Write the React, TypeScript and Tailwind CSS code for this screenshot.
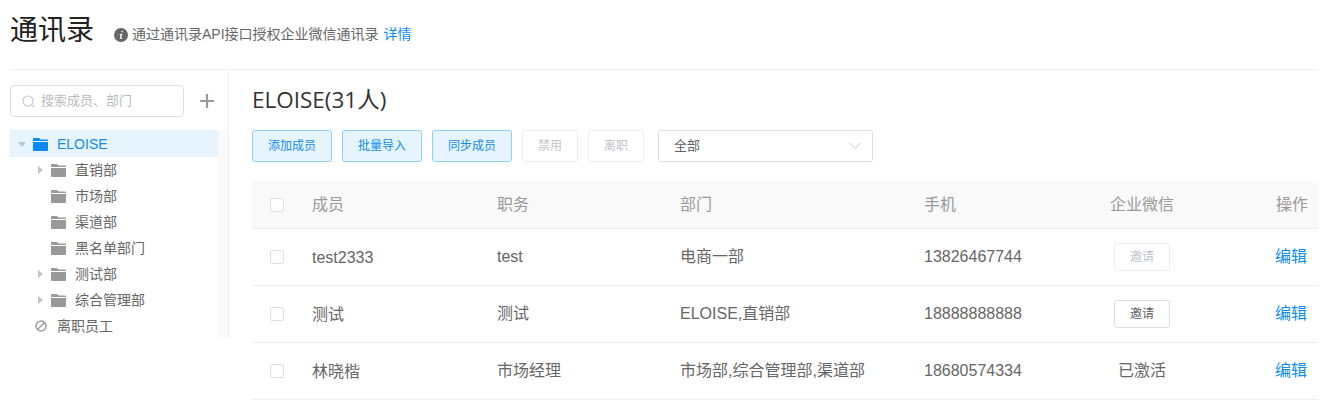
import React from "react";

function Folder({ color }: { color: string }) {
  return (
    <svg width="15" height="13" viewBox="0 0 15 13" className="shrink-0">
      <path d="M0 .8C0 .4.400 0 .8 0h4.700c.3 0 .5.100.7.300L7.600 1.600h6.600c.4 0 .8.400.8.800V3H0z" fill={color} />
      <path d="M0 4h15v8.200c0 .4-.4.800-.8.800H.8c-.4 0-.8-.4-.8-.8z" fill={color} />
    </svg>
  );
}

function Tree({ label, caret, active, indent }: { label: string; caret?: "right" | "down"; active?: boolean; indent?: boolean }) {
  return (
    <div className={`flex items-center ${active ? "h-[27px] bg-[#e8f4fd] pt-[1px] text-[#0f8df0]" : "h-[26px] text-[#666]"}`}>
      <div className={`flex shrink-0 items-center justify-end ${indent ? "w-[36px]" : "w-[18px]"}`}>
        {caret === "right" && <div className="mr-[3px] h-0 w-0 border-y-[4px] border-l-[5px] border-y-transparent border-l-[#c0c4cc]" />}
        {caret === "down" && <div className="mr-[2px] h-0 w-0 border-x-[4px] border-t-[5px] border-x-transparent border-t-[#c0c4cc]" />}
      </div>
      <div className="ml-[5px]">
        <Folder color={active ? "#0a8af0" : "#999"} />
      </div>
      <span className="ml-[9px] text-[14px]">{label}</span>
    </div>
  );
}

const rowGrid = "grid grid-cols-[60px_185px_183px_244px_130px_176px_1fr] items-center";

function Check() {
  return <div className="ml-[18px] h-[14px] w-[14px] rounded-[2px] border border-[#dcdfe6] bg-white" />;
}

function Row({ a, b, c, d, wx }: { a: string; b: string; c: string; d: string; wx: React.ReactNode }) {
  return (
    <div className={`${rowGrid} h-[57px] border-b border-[#ebeef5] text-[16px] text-[#666]`}>
      <Check />
      <div className="pt-[1px]">{a}</div>
      <div>{b}</div>
      <div>{c}</div>
      <div>{d}</div>
      <div className="flex justify-center">{wx}</div>
      <div className="pl-[45px] text-[#0f8df0]">编辑</div>
    </div>
  );
}

function Btn({ children }: { children: React.ReactNode }) {
  return <button className="h-[32px] w-[80px] rounded-[3px] border border-[#91d0f8] bg-[#e6f4fd] text-[12px] text-[#0f8df0]">{children}</button>;
}

export default function App() {
  return (
    <div className="h-[409px] w-[1330px] overflow-hidden bg-white pl-[10px] pr-[12px] font-['Liberation_Sans','Noto_Sans_CJK_SC',sans-serif]">
      <div className="flex h-[70px] items-center border-b border-[#f0f0f0] pb-[8px]">
        <h1 className="text-[28px] font-normal leading-none text-[#222]">通讯录</h1>
        <div className="flex items-center pt-[8px]">
          <svg width="14" height="14" viewBox="0 0 14 14" className="ml-[20px]">
            <circle cx="7" cy="7" r="7" fill="#666" />
            <path d="M7.600 2.800h1.300l-.3 1.400H7.300zM6 6h2.400l-1 3.900h1l-.2.900H5.700l1-3.900h-1z" fill="#fff" />
          </svg>
          <span className="ml-[4px] text-[14px] text-[#666]">通过通讯录API接口授权企业微信通讯录</span>
          <span className="ml-[5px] text-[14px] text-[#0f8df0]">详情</span>
        </div>
      </div>
      <div className="flex">
        <aside className="h-[268px] w-[219px] shrink-0 border-r border-[#f0f0f0]">
          <div className="flex h-[60px] items-start pt-[15px]">
            <div className="flex h-[32px] w-[174px] items-center rounded-[4px] border border-[#dcdfe6] pl-[11px] text-[13px] text-[#bbb]">
              <svg width="13" height="13" viewBox="0 0 13 13" fill="none" stroke="#c0c4cc" strokeWidth="1.100">
                <circle cx="6" cy="6" r="5" />
                <path d="M9.800 9.800l2.500 2.500" />
              </svg>
              <span className="ml-[6px]">搜索成员、部门</span>
            </div>
            <svg width="14" height="14" viewBox="0 0 14 14" className="ml-[16px] mt-[9px]" fill="none" stroke="#999" strokeWidth="2.200">
              <path d="M7 0v14M0 7h14" />
            </svg>
          </div>
          <div className="flex">
            <div className="w-[208px]">
              <Tree label="ELOISE" caret="down" active />
              <Tree label="直销部" caret="right" indent />
              <Tree label="市场部" indent />
              <Tree label="渠道部" indent />
              <Tree label="黑名单部门" indent />
              <Tree label="测试部" caret="right" indent />
              <Tree label="综合管理部" caret="right" indent />
              <div className="flex h-[26px] items-center text-[14px] text-[#666]">
                <svg width="12" height="12" viewBox="0 0 12 12" fill="none" stroke="#999" strokeWidth="1.400" className="ml-[25px]">
                  <circle cx="6" cy="6" r="5" />
                  <path d="M2.600 9.400l6.800-6.800" />
                </svg>
                <span className="ml-[10px]">离职员工</span>
              </div>
            </div>
            <div className="h-[208px] w-[10px] bg-[#fafafa]" />
          </div>
        </aside>
        <main className="ml-[23px] min-w-0 flex-1">
          <div className="pt-[17px] font-['Open_Sans','Noto_Sans_CJK_SC',sans-serif] text-[22.5px] leading-[26px] text-[#333]">ELOISE(31人)</div>
          <div className="mt-[17px] flex h-[32px] gap-[10px]">
            <Btn>添加成员</Btn>
            <Btn>批量导入</Btn>
            <Btn>同步成员</Btn>
            <button className="h-[32px] w-[56px] rounded-[3px] border border-[#ebeef5] text-[12px] text-[#c0c4cc]">禁用</button>
            <button className="h-[32px] w-[56px] rounded-[3px] border border-[#ebeef5] text-[12px] text-[#c0c4cc]">离职</button>
            <div className="ml-[4px] flex h-[32px] w-[215px] items-center justify-between rounded-[3px] border border-[#dcdfe6] pl-[15px] pr-[10px] text-[13px] text-[#606266]">
              <span>全部</span>
              <svg width="14" height="8" viewBox="0 0 14 8" fill="none" stroke="#c0c4cc" strokeWidth="1">
                <path d="M1.500 1l5.500 5.500L12.500 1" />
              </svg>
            </div>
          </div>
          <div className={`${rowGrid} mt-[19px] h-[48px] border-b border-[#ebeef5] bg-[#f9f9f9] text-[16px] text-[#999]`}>
            <Check />
            <div>成员</div>
            <div>职务</div>
            <div>部门</div>
            <div>手机</div>
            <div className="flex justify-center">企业微信</div>
            <div className="pl-[46px]">操作</div>
          </div>
          <Row a="test2333" b="test" c="电商一部" d="13826467744" wx={<button className="h-[28px] w-[56px] rounded-[3px] border border-[#ebeef5] text-[12px] text-[#c0c4cc]">邀请</button>} />
          <Row a="测试" b="测试" c="ELOISE,直销部" d="18888888888" wx={<button className="h-[28px] w-[56px] rounded-[3px] border border-[#dcdfe6] text-[12px] text-[#606266]">邀请</button>} />
          <Row a="林晓楷" b="市场经理" c="市场部,综合管理部,渠道部" d="18680574334" wx={<span>已激活</span>} />
        </main>
      </div>
    </div>
  );
}
